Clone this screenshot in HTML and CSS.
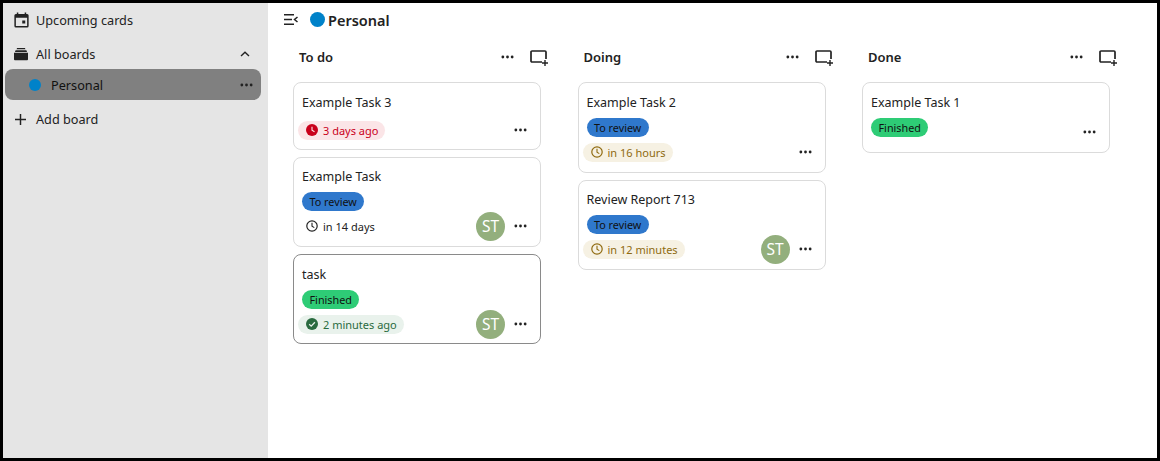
FILE: index.html
```html
<!DOCTYPE html>
<html lang="en">
<head>
<meta charset="utf-8">
<title>Personal - Deck</title>
<link rel="stylesheet" href="styles.css">
</head>
<body>
<svg class="defs" width="0" height="0" aria-hidden="true">
  <symbol id="dots" viewBox="0 0 14 4"><circle cx="2" cy="2" r="1.500"/><circle cx="7" cy="2" r="1.500"/><circle cx="12" cy="2" r="1.500"/></symbol>
  <symbol id="addcard" viewBox="0 0 18 16"><path d="M12 12H2A1 1 0 0 1 1 11V2A1 1 0 0 1 2 1h13A1 1 0 0 1 16 2V9" fill="none" stroke="currentColor" stroke-width="1.700"/><path d="M14.300 10h1.400v2.300H18v1.400h-2.300V16h-1.400v-2.300H12v-1.400h2.300z" fill="currentColor"/></symbol>
  <symbol id="clock" viewBox="0 0 12 12"><circle cx="6" cy="6" r="5.200" fill="none" stroke="currentColor" stroke-width="1.200"/><path d="M6 2.800V6.200L8.300 7.600" fill="none" stroke="currentColor" stroke-width="1.100"/></symbol>
  <symbol id="clockfill" viewBox="0 0 12 12"><circle cx="6" cy="6" r="6" fill="currentColor"/><path d="M6 2.800V6.200L8.500 7.700" fill="none" stroke="#fbe5e7" stroke-width="1.100"/></symbol>
  <symbol id="checkfill" viewBox="0 0 12 12"><circle cx="6" cy="6" r="6" fill="currentColor"/><path d="M3.200 6.200L5.200 8.100L8.900 4.200" fill="none" stroke="#e9f2ec" stroke-width="1.300"/></symbol>
</svg>
<div class="app">
  <nav class="sidebar">
    <div class="nav-row nav-upcoming">
      <svg class="nav-icon" viewBox="0 0 16 17"><path d="M3 0.500h1.600V2h6.800V0.500H13V2h1a1.600 1.600 0 0 1 1.600 1.600v11.200A1.600 1.600 0 0 1 14 16.400H2a1.600 1.600 0 0 1-1.600-1.600V3.600A1.600 1.600 0 0 1 2 2h1zM2 6v8.800h12V6zM8.800 9h3.200v3.200H8.800z" fill-rule="evenodd"/></svg>
      <span>Upcoming cards</span>
    </div>
    <div class="nav-row nav-all">
      <svg class="nav-icon nav-icon-archive" viewBox="0 0 16 14"><path d="M3.500 0h9l.6 1.600H2.900zM1.800 2.600h12.400l.7 2H1.100zM0 5.600h16V13a1 1 0 0 1-1 1H1a1 1 0 0 1-1-1z"/></svg>
      <span class="grow">All boards</span>
      <svg class="chev" viewBox="0 0 10 6"><path d="M1 5L5 1.200L9 5" fill="none" stroke="currentColor" stroke-width="1.400"/></svg>
    </div>
    <div class="board-row">
      <i class="dot"></i>
      <span class="grow">Personal</span>
      <svg class="dots"><use href="#dots"/></svg>
    </div>
    <div class="nav-row nav-add">
      <svg class="nav-icon plus" viewBox="0 0 12 12"><path d="M5.200 0h1.600v5.200H12v1.600H6.800V12H5.200V6.800H0V5.200h5.200z"/></svg>
      <span>Add board</span>
    </div>
  </nav>
  <main class="main">
    <header class="topbar">
      <svg class="toggle" viewBox="0 0 14 11"><path d="M0 .8h10M0 5.500h8M0 10.200h10" stroke="currentColor" stroke-width="1.500" fill="none"/><path d="M13.500 3L10.500 5.500L13.500 8" stroke="currentColor" stroke-width="1.500" fill="none"/></svg>
      <i class="dot dot-lg"></i>
      <h1>Personal</h1>
    </header>
    <div class="columns">
      <section class="column">
        <div class="col-head"><h2>To do</h2><svg class="dots"><use href="#dots"/></svg><svg class="addcard"><use href="#addcard"/></svg></div>
        <article class="card card-short">
          <div class="title">Example Task 3</div>
          <div class="foot foot-short">
            <span class="due due-over"><svg class="clock"><use href="#clockfill"/></svg>3 days ago</span>
            <svg class="dots"><use href="#dots"/></svg>
          </div>
        </article>
        <article class="card card-tight">
          <div class="title">Example Task</div>
          <span class="tag tag-blue">To review</span>
          <div class="foot">
            <span class="due"><svg class="clock"><use href="#clock"/></svg>in 14 days</span>
            <span class="avatar">ST</span>
            <svg class="dots"><use href="#dots"/></svg>
          </div>
        </article>
        <article class="card card-active">
          <div class="title">task</div>
          <span class="tag tag-green">Finished</span>
          <div class="foot">
            <span class="due due-done"><svg class="clock"><use href="#checkfill"/></svg>2 minutes ago</span>
            <span class="avatar">ST</span>
            <svg class="dots"><use href="#dots"/></svg>
          </div>
        </article>
      </section>
      <section class="column">
        <div class="col-head"><h2>Doing</h2><svg class="dots"><use href="#dots"/></svg><svg class="addcard"><use href="#addcard"/></svg></div>
        <article class="card card-tall">
          <div class="title">Example Task 2</div>
          <span class="tag tag-blue">To review</span>
          <div class="foot">
            <span class="due due-soon"><svg class="clock"><use href="#clock"/></svg>in 16 hours</span>
            <svg class="dots"><use href="#dots"/></svg>
          </div>
        </article>
        <article class="card card-tight">
          <div class="title">Review Report 713</div>
          <span class="tag tag-blue">To review</span>
          <div class="foot">
            <span class="due due-soon"><svg class="clock"><use href="#clock"/></svg>in 12 minutes</span>
            <span class="avatar">ST</span>
            <svg class="dots"><use href="#dots"/></svg>
          </div>
        </article>
      </section>
      <section class="column">
        <div class="col-head"><h2>Done</h2><svg class="dots"><use href="#dots"/></svg><svg class="addcard"><use href="#addcard"/></svg></div>
        <article class="card card-done">
          <div class="title">Example Task 1</div>
          <span class="tag tag-green">Finished</span>
          <div class="foot foot-end">
            <svg class="dots"><use href="#dots"/></svg>
          </div>
        </article>
      </section>
    </div>
  </main>
</div>
</body>
</html>
```
FILE: styles.css
```css
* { box-sizing: border-box; }
html, body { margin: 0; height: 100%; }
body {
  font-family: "Noto Sans", "Open Sans", "Liberation Sans", sans-serif;
  color: #222;
  background: #fff;
  font-size: 13px;
}
.defs { display: block; height: 0; }
.app { display: flex; height: 461px; border: 3px solid #000; background: #fff; }
.sidebar { width: 265px; flex: none; background: #e5e5e5; padding-top: 4px; }
.nav-row { display: flex; align-items: center; font-size: 12.700px; color: #222; }
.nav-upcoming { height: 26px; padding-left: 11px; }
.nav-all { height: 26px; margin-top: 8px; margin-bottom: 2px; padding-left: 11px; }
.nav-add { height: 26px; margin-top: 6px; padding-left: 11px; }
.nav-icon { width: 15px; height: 16px; margin-right: 7px; fill: #222; flex: none; }
.nav-icon-archive { width: 14px; margin-right: 8px; }
.plus { width: 11px; height: 11px; margin: 0 10px 0 1px; }
.chev { width: 10px; height: 6px; margin-right: 18px; }
.grow { flex: 1; }
.board-row {
  display: flex; align-items: center;
  height: 31px; margin: 0 7px 0 2px; padding: 0 8px 0 24px;
  background: #808080; border-radius: 8px; font-size: 12.700px; color: #111;
}
.dot { display: block; width: 12px; height: 12px; border-radius: 50%; background: #0082c9; margin-right: 10px; flex: none; }
.dots { display: block; width: 13px; height: 4px; fill: #222; flex: none; }
.main { flex: 1; min-width: 0; padding: 0 0 0 16px; }
.topbar { display: flex; align-items: center; height: 33px; }
.toggle { width: 14px; height: 11px; margin-right: 12px; color: #222; flex: none; }
.dot-lg { width: 15px; height: 15px; margin-right: 3px; }
h1 { margin: 0; font-size: 14.500px; font-weight: 600; color: #222; }
.columns { display: flex; gap: 36.500px; padding-left: 9px; }
.column { width: 248px; flex: none; }
.col-head { display: flex; align-items: center; height: 22px; margin: 10px -7px 14px 0; padding-left: 6px; }
.col-head h2 { flex: 1; margin: 0; font-size: 13px; font-weight: 600; color: #222; }
.col-head .dots { margin-right: 16px; }
.addcard { display: block; width: 18px; height: 16px; color: #222; margin-top: 2px; }
.card {
  display: flex; flex-direction: column; align-items: flex-start;
  height: 90px; padding: 9px 8px 0 8px; margin-bottom: 7px;
  border: 1px solid #dbdbdb; border-radius: 8px; background: #fff;
}
.card-short { height: 68px; }
.card-tall { height: 91px; }
.card-tight { padding-top: 8px; }
.card-done { height: 71px; }
.card-active { border-color: #8a8a8a; }
.title { font-size: 12.500px; line-height: 21px; color: #222; height: 21px; margin-bottom: 5px; }
.tag {
  display: block; height: 19px; line-height: 19px; padding: 0 7.500px; border-radius: 10px;
  font-size: 10.800px; color: #111;
}
.tag-blue { background: #2f78cc; }
.tag-green { background: #2ecc76; }
.foot { display: flex; align-items: center; align-self: stretch; height: 30px; margin-left: -4px; }
.foot-short { margin-top: -3px; }
.foot-end { margin-top: -20px; }
.foot > .dots { margin-left: auto; margin-right: 5px; }
.avatar + .dots { margin-left: 9px; }
.avatar {
  width: 29px; height: 29px; border-radius: 50%; background: #93af7d; color: #fff;
  display: flex; align-items: center; justify-content: center;
  font-size: 15.500px; margin-left: auto;
}
.due {
  display: inline-flex; align-items: center; height: 19px; padding: 0 7px 0 8px;
  border-radius: 10px; font-size: 11px; color: #222;
}
.clock { display: block; width: 12px; height: 12px; margin-right: 5px; flex: none; }
.due-over { background: #fbe5e7; color: #c9001b; }
.due-done { background: #e9f2ec; color: #2a6b40; }
.due-soon { background: #f6f1e3; color: #8f6a0f; }
```
